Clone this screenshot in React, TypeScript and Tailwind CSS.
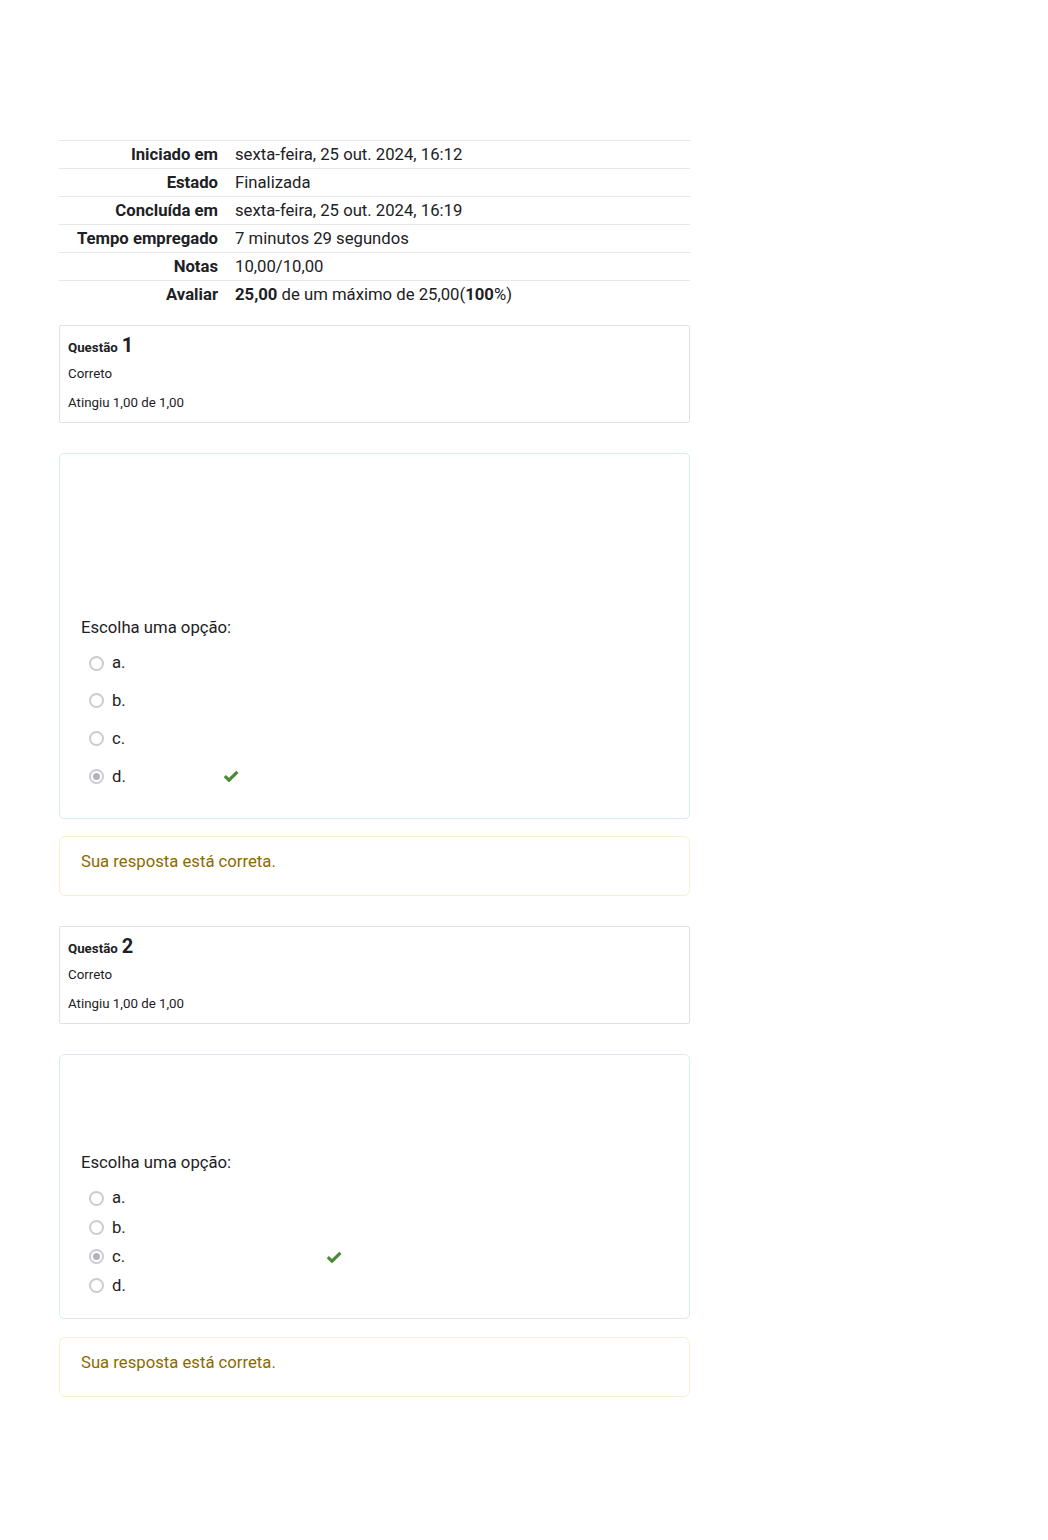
import React from "react";

const rows: { label: string; value: React.ReactNode }[] = [
  { label: "Iniciado em", value: "sexta-feira, 25 out. 2024, 16:12" },
  { label: "Estado", value: "Finalizada" },
  { label: "Concluída em", value: "sexta-feira, 25 out. 2024, 16:19" },
  { label: "Tempo empregado", value: "7 minutos 29 segundos" },
  { label: "Notas", value: "10,00/10,00" },
  {
    label: "Avaliar",
    value: (
      <>
        <b className="font-bold">25,00</b> de um máximo de 25,00(<b className="font-bold">100</b>%)
      </>
    ),
  },
];

function Check() {
  return (
    <svg width="16" height="12" viewBox="0 0 16 12" className="block">
      <path
        d="M1.8 6.2 L6 10.2 L14.4 1.8"
        fill="none"
        stroke="#4b8a38"
        strokeWidth="3.2"
        strokeLinejoin="miter"
      />
    </svg>
  );
}

function Radio({ checked }: { checked: boolean }) {
  return (
    <span className="w-[15px] h-[15px] rounded-full border-2 border-[#cbcbd2] bg-white flex items-center justify-center shrink-0">
      {checked && <span className="w-[7px] h-[7px] rounded-full bg-[#b3b3bd]" />}
    </span>
  );
}

function InfoBox({ n }: { n: number }) {
  return (
    <div className="border border-[#dee2e6] rounded-[2px] pl-[8px] pt-[8px] pb-[10px] text-[#1d2125]">
      <div className="h-[22px] flex items-baseline">
        <span className="text-[13.3px] font-bold">Questão</span>
        <span className="text-[20px] font-bold ml-[4px] leading-[22px]">{n}</span>
      </div>
      <div className="mt-[9px] text-[13.3px] leading-[18px]">Correto</div>
      <div className="mt-[11px] text-[13.3px] leading-[18px]">Atingiu 1,00 de 1,00</div>
    </div>
  );
}

function Options({
  selected,
  gap,
  checkLeft,
  letters,
}: {
  selected: number;
  gap: string;
  checkLeft: string;
  letters: string[];
}) {
  return (
    <div className={`flex flex-col ${gap} mt-[11px]`}>
      {letters.map((l, i) => (
        <div key={l} className="flex items-center h-[24px] pl-[8px]">
          <Radio checked={i === selected} />
          <span className="ml-[8px] text-[16.7px]">{l}</span>
          {i === selected && <span className={checkLeft}><Check /></span>}
        </div>
      ))}
    </div>
  );
}

function Feedback() {
  return (
    <div className="border border-[#fcefcf] rounded-[6px] pl-[21px] pt-[13px] pb-[21px] text-[16.7px] leading-[24px] text-[#8c6a00]">
      Sua resposta está correta.
    </div>
  );
}

export default function App() {
  return (
    <div
      className="bg-white min-h-[1540px] w-[1048px] text-[#1d2125]"
      style={{ fontFamily: "Roboto, 'Liberation Sans', sans-serif" }}
    >
      <div className="ml-[59px] w-[631px] pt-[140px]">
        <div className="flex flex-col">
          {rows.map((r) => (
            <div
              key={r.label}
              className="flex h-[28px] items-center text-[16.7px] border-t border-[#e5e7ea]"
            >
              <div className="w-[167px] text-right pr-[8px] font-bold">{r.label}</div>
              <div className="pl-[9px]">{r.value}</div>
            </div>
          ))}
        </div>

        <div className="mt-[17px]">
          <InfoBox n={1} />
        </div>

        <div className="mt-[30px] h-[366px] border border-[#d6ecf1] rounded-[5px] pl-[21px] pt-[162px]">
          <div className="text-[16.7px] leading-[24px]">Escolha uma opção:</div>
          <Options
            selected={3}
            gap="gap-[13.7px]"
            checkLeft="ml-[97px]"
            letters={["a.", "b.", "c.", "d."]}
          />
        </div>

        <div className="mt-[17px]">
          <Feedback />
        </div>

        <div className="mt-[30px]">
          <InfoBox n={2} />
        </div>

        <div className="mt-[30px] h-[265px] border border-[#d6ecf1] rounded-[5px] pl-[21px] pt-[96px]">
          <div className="text-[16.7px] leading-[24px]">Escolha uma opção:</div>
          <Options
            selected={2}
            gap="gap-[5.3px]"
            checkLeft="ml-[201px]"
            letters={["a.", "b.", "c.", "d."]}
          />
        </div>

        <div className="mt-[18px]">
          <Feedback />
        </div>
      </div>
    </div>
  );
}
